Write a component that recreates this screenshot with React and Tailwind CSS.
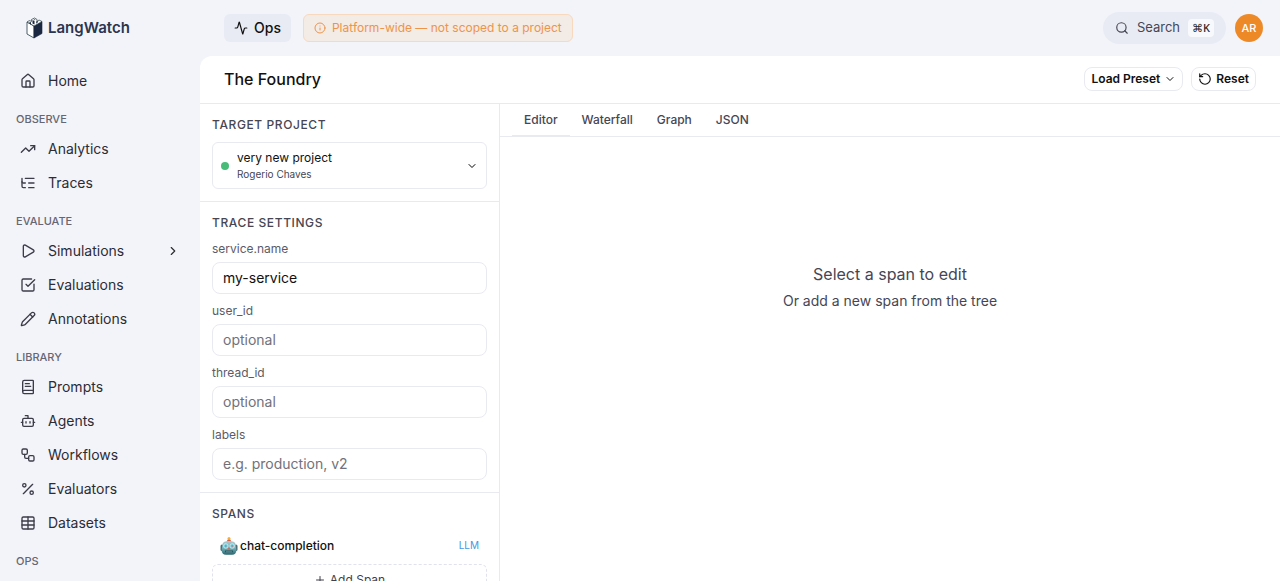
import React, { useState } from 'react';
import {
  Activity,
  BookText,
  Bot,
  ChevronDown,
  ChevronRight,
  House,
  Info,
  ListTree,
  Pencil,
  Percent,
  Play,
  Plus,
  RotateCcw,
  Search,
  SquareCheckBig,
  Table,
  TrendingUp,
  Workflow,
} from 'lucide-react';

const NAV = [
  { items: [{ label: 'Home', icon: House }] },
  {
    title: 'Observe',
    items: [
      { label: 'Analytics', icon: TrendingUp },
      { label: 'Traces', icon: ListTree },
    ],
  },
  {
    title: 'Evaluate',
    items: [
      { label: 'Simulations', icon: Play, expandable: true },
      { label: 'Evaluations', icon: SquareCheckBig },
      { label: 'Annotations', icon: Pencil },
    ],
  },
  {
    title: 'Library',
    items: [
      { label: 'Prompts', icon: BookText },
      { label: 'Agents', icon: Bot },
      { label: 'Workflows', icon: Workflow },
      { label: 'Evaluators', icon: Percent },
      { label: 'Datasets', icon: Table },
    ],
  },
  { title: 'Ops', items: [] },
];

const TABS = ['Editor', 'Waterfall', 'Graph', 'JSON'];

const FIELDS = [
  { name: 'service.name', initial: 'my-service' },
  { name: 'user_id', placeholder: 'optional' },
  { name: 'thread_id', placeholder: 'optional' },
  { name: 'labels', placeholder: 'e.g. production, v2' },
];

function Logo() {
  return (
    <svg width="17" height="22" viewBox="0 0 17 22" fill="none" aria-hidden="true">
      <path d="M1 5 8 9v12l-7-4z" fill="#fff" stroke="#213b41" strokeWidth="0.8" strokeLinejoin="round" />
      <path d="M8 9l8-4.500v12L8 21z" fill="#1c2742" stroke="#1c2742" strokeWidth="0.6" strokeLinejoin="round" />
      <path d="M1 5l2.500-1.500 2 1V2.500L8.500 1l2.500 1.500v2l2-1.500 3 1.500L8 9z" fill="#fff" stroke="#213b41" strokeWidth="0.7" strokeLinejoin="round" />
      <path d="M3.500 4.500 5 5.500v2l-1.500-1zM6.500 3l2 1v3.500l-2-1zM10.500 4l2 .8-2.500 2z" fill="#1c2742" />
      <path d="M8.500 2.200l1 .6-1 .5-1-.5z" fill="#213b41" />
    </svg>
  );
}

function RobotIcon() {
  return (
    <svg width="18" height="18" viewBox="0 0 18 18" aria-hidden="true">
      <defs>
        <linearGradient id="robot-head" x1="0" y1="0" x2="0" y2="1">
          <stop offset="0" stopColor="#b4c6ca" />
          <stop offset="0.5" stopColor="#79b3ba" />
          <stop offset="1" stopColor="#256771" />
        </linearGradient>
      </defs>
      <circle cx="9" cy="1.500" r="1.500" fill="#f2b03b" />
      <path d="M7.500 2.800h3l.8 2H6.700z" fill="#d2604f" />
      <rect x="0.500" y="7.500" width="3" height="6.500" rx="1.500" fill="#4b6d76" />
      <rect x="14.500" y="7.500" width="3" height="6.500" rx="1.500" fill="#4b6d76" />
      <path d="M2.500 7Q3 4 9 4t6.500 3l.8 6q.2 4.700-4.300 4.700H6Q1.500 17.700 1.700 13z" fill="url(#robot-head)" />
      <circle cx="5.800" cy="9" r="2.300" fill="#62cfe2" stroke="#e0f1f3" strokeWidth="0.700" />
      <circle cx="12.200" cy="9" r="2.300" fill="#62cfe2" stroke="#e0f1f3" strokeWidth="0.700" />
      <circle cx="5.800" cy="9" r="0.800" fill="#c9656a" />
      <circle cx="12.200" cy="9" r="0.800" fill="#c9656a" />
      <path d="M9 10.300l1.200 1.900H7.800z" fill="#d2604f" />
      <rect x="5" y="13.300" width="8" height="2.200" rx="1.100" fill="#27525b" />
      <path d="M7 13.500v2M9 13.500v2M11 13.500v2" stroke="#b9dfe2" strokeWidth="0.600" />
    </svg>
  );
}

function NavItem({ item }) {
  const Icon = item.icon;
  return (
    <a href="#" className="flex h-8 items-center gap-3 rounded-lg px-3 text-sm text-[#2c2c35] hover:bg-[#e8eaf3]">
      <Icon className="h-4 w-4 text-[#3c3c48]" />
      <span className="flex-1">{item.label}</span>
      {item.expandable && <ChevronRight className="h-[14px] w-[14px]" />}
    </a>
  );
}

function Sidebar() {
  return (
    <nav className="flex w-[200px] shrink-0 flex-col gap-[2px] px-2 pt-[9px]">
      {NAV.map((group, i) => (
        <React.Fragment key={i}>
          {group.title && (
            <h2 className="px-2 pt-[11px] pb-[3px] text-[11px] leading-[18px] font-medium text-[#666672] uppercase">
              {group.title}
            </h2>
          )}
          {group.items.map((item) => (
            <NavItem key={item.label} item={item} />
          ))}
        </React.Fragment>
      ))}
    </nav>
  );
}

function TopBar() {
  return (
    <header className="flex h-14 shrink-0 items-center pr-[17px]">
      <a href="#" className="flex w-[224px] items-center gap-[5px] pl-[26px]">
        <Logo />
        <span className="text-[15px] font-semibold text-[#2a3650]">LangWatch</span>
      </a>
      <button type="button" className="flex h-7 items-center gap-[6px] rounded-md bg-[#e9ebf4] px-[10px] text-sm font-medium text-[#111]">
        <Activity className="h-[14px] w-[14px]" />
        Ops
      </button>
      <div className="ml-3 flex h-7 items-center gap-[6px] rounded-md border border-[#f8d9bd] bg-[#f3ebe6] px-[10px] text-xs text-[#ee9449]">
        <Info className="h-3 w-3" />
        Platform-wide — not scoped to a project
      </div>
      <div className="ml-auto flex items-center gap-[9px]">
        <button type="button" className="flex h-8 items-center gap-2 rounded-full bg-[#e9ebf4] px-3 text-[13px] text-[#464653]">
          <Search className="h-[14px] w-[14px]" />
          Search
          <kbd className="rounded-sm bg-[#f8f9fc] px-1 font-sans text-[11px] leading-[18px] font-medium text-[#27272f]">⌘K</kbd>
        </button>
        <button type="button" className="h-7 w-7 rounded-full bg-[#ed8926] text-[11px] font-medium text-white">
          AR
        </button>
      </div>
    </header>
  );
}

function SectionTitle({ children }) {
  return (
    <h2 className="mb-2 text-xs leading-[18px] font-medium tracking-wider text-[#464653] uppercase">{children}</h2>
  );
}

function SettingField({ field }) {
  const [value, setValue] = useState(field.initial || '');
  return (
    <div className="flex flex-col gap-1">
      <label htmlFor={field.name} className="text-xs leading-[18px] text-[#5b5b68]">
        {field.name}
      </label>
      <input
        id={field.name}
        type="text"
        value={value}
        placeholder={field.placeholder}
        onChange={(e) => setValue(e.target.value)}
        className="h-8 w-full rounded-lg border border-[#e9eaf1] bg-white px-[10px] pb-[2px] text-sm text-[#111] placeholder-[#71717a] focus:border-[#ed8926] focus:outline-none"
      />
    </div>
  );
}

function SettingsPanel() {
  return (
    <aside className="w-[300px] shrink-0 overflow-y-auto border-r border-[#e9eaf1] [scrollbar-width:none]">
      {/* Target project */}
      <section className="border-b border-[#e9eaf1] p-3">
        <SectionTitle>Target Project</SectionTitle>
        <button type="button" className="flex h-[47px] w-full items-center gap-2 rounded-md border border-[#e9eaf1] px-2 text-left">
          <span className="h-2 w-2 rounded-full bg-[#48bb78]" />
          <span className="flex-1">
            <span className="block text-xs leading-[18px] text-[#111]">very new project</span>
            <span className="block text-[10px] leading-[15px] text-[#464653]">Rogerio Chaves</span>
          </span>
          <ChevronDown className="h-3 w-3" />
        </button>
      </section>

      {/* Trace settings */}
      <section className="border-b border-[#e9eaf1] p-3">
        <SectionTitle>Trace Settings</SectionTitle>
        <div className="flex flex-col gap-2">
          {FIELDS.map((field) => (
            <SettingField key={field.name} field={field} />
          ))}
        </div>
      </section>

      {/* Spans */}
      <section className="p-3">
        <SectionTitle>Spans</SectionTitle>
        <button type="button" className="mb-1 flex h-[29px] w-full items-center gap-[2px] px-2 text-xs font-medium text-[#111]">
          <RobotIcon />
          chat-completion
          <span className="ml-auto text-[10px] font-normal text-[#4a96e0]">LLM</span>
        </button>
        <button type="button" className="flex h-8 w-full items-center justify-center gap-1 rounded-md border border-dashed border-[#e0e2ee] text-xs text-[#3f3f4a]">
          <Plus className="h-3 w-3" />
          Add Span
        </button>
      </section>
    </aside>
  );
}

function EditorPanel() {
  const [active, setActive] = useState('Editor');
  return (
    <div className="flex min-w-0 flex-1 flex-col">
      <div role="tablist" className="flex h-[33px] border-b border-[#e9eaf1] px-3">
        {TABS.map((tab) => (
          <button
            key={tab}
            type="button"
            role="tab"
            aria-selected={active === tab}
            onClick={() => setActive(tab)}
            className={`border-b px-3 text-xs font-medium text-[#464653] ${
              active === tab ? 'border-[#e9eaf1]' : 'border-transparent'
            }`}
          >
            {tab}
          </button>
        ))}
      </div>
      <div className="flex flex-col items-center gap-1 pt-[125px] text-[#464653]">
        <p className="text-base">Select a span to edit</p>
        <p className="text-sm leading-[22px]">Or add a new span from the tree</p>
      </div>
    </div>
  );
}

export default function App() {
  return (
    <div className="flex h-screen flex-col overflow-hidden bg-[#f3f4f9] font-['Inter',sans-serif]">
      <TopBar />
      <div className="flex min-h-0 flex-1">
        <Sidebar />
        <main className="flex min-w-0 flex-1 flex-col rounded-tl-xl bg-white">
          <div className="flex h-12 shrink-0 items-center gap-2 border-b border-[#e9eaf1] px-6 pb-px">
            <h1 className="flex-1 text-base font-medium text-[#111]">The Foundry</h1>
            <button type="button" className="flex h-6 items-center gap-1 rounded-lg border border-[#e9eaf1] px-[6px] text-xs font-semibold text-[#111]">
              Load Preset
              <ChevronDown className="h-3 w-3" />
            </button>
            <button type="button" className="flex h-6 items-center gap-1 rounded-lg border border-[#e9eaf1] px-[6px] text-xs font-semibold text-[#111]">
              <RotateCcw className="h-[14px] w-[14px]" />
              Reset
            </button>
          </div>
          <div className="flex min-h-0 flex-1">
            <SettingsPanel />
            <EditorPanel />
          </div>
        </main>
      </div>
    </div>
  );
}
